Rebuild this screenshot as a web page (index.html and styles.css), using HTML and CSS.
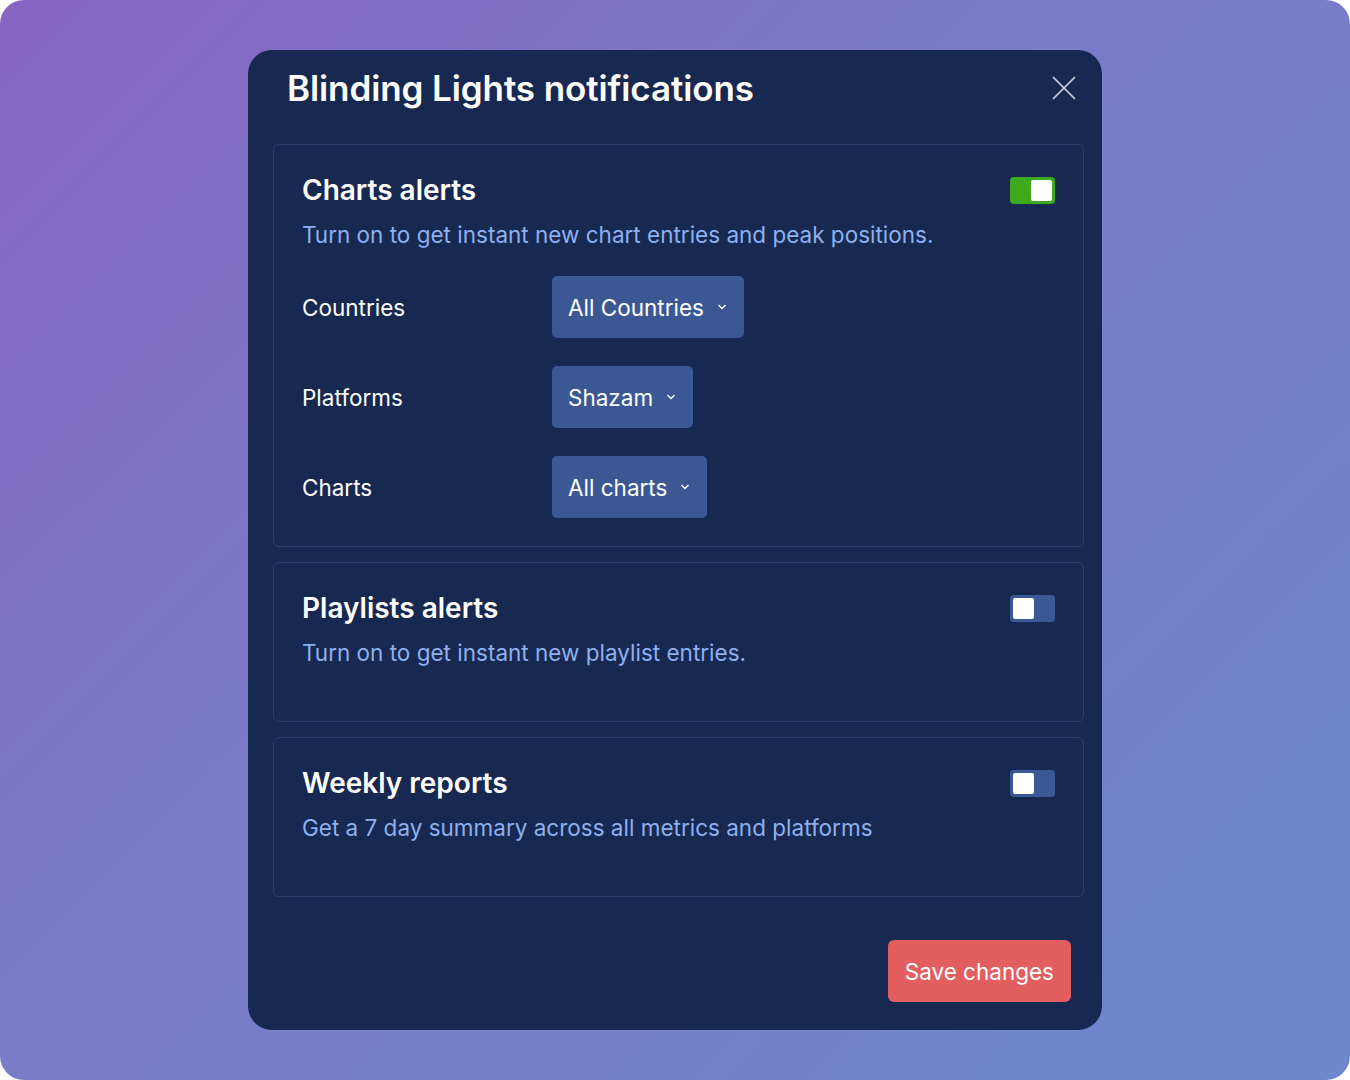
FILE: index.html
```html
<!DOCTYPE html>
<html lang="en">
<head>
  <meta charset="UTF-8">
  <meta name="viewport" content="width=device-width, initial-scale=1.0">
  <title>Blinding Lights notifications</title>
  <link rel="stylesheet" href="styles.css">
</head>
<body>
  <div class="backdrop">
    <div class="modal">
      <!-- Cabecera -->
      <div class="modal-header">
        <h1>Blinding Lights notifications</h1>
        <button class="close" aria-label="Close">
          <svg width="24" height="24" viewBox="0 0 24 24"><path d="M1 1L23 23M23 1L1 23" stroke="#d5d9e6" stroke-width="1.6" fill="none"/></svg>
        </button>
      </div>

      <div class="sections">
        <!-- Alertas de charts -->
        <section class="card">
          <div class="card-head">
            <h2>Charts alerts</h2>
            <span class="toggle on"><span class="knob"></span></span>
          </div>
          <p class="desc">Turn on to get instant new chart entries and peak positions.</p>
          <div class="rows">
            <div class="row">
              <span class="label">Countries</span>
              <button class="select">All Countries <svg width="10" height="6" viewBox="0 0 10 6"><path d="M1.5 1L5 4.5L8.5 1" stroke="#fff" stroke-width="1.4" fill="none"/></svg></button>
            </div>
            <div class="row">
              <span class="label">Platforms</span>
              <button class="select">Shazam <svg width="10" height="6" viewBox="0 0 10 6"><path d="M1.5 1L5 4.5L8.5 1" stroke="#fff" stroke-width="1.4" fill="none"/></svg></button>
            </div>
            <div class="row">
              <span class="label">Charts</span>
              <button class="select">All charts <svg width="10" height="6" viewBox="0 0 10 6"><path d="M1.5 1L5 4.5L8.5 1" stroke="#fff" stroke-width="1.4" fill="none"/></svg></button>
            </div>
          </div>
        </section>

        <!-- Alertas de playlists -->
        <section class="card short">
          <div class="card-head">
            <h2>Playlists alerts</h2>
            <span class="toggle"><span class="knob"></span></span>
          </div>
          <p class="desc">Turn on to get instant new playlist entries.</p>
        </section>

        <!-- Reportes semanales -->
        <section class="card short">
          <div class="card-head">
            <h2>Weekly reports</h2>
            <span class="toggle"><span class="knob"></span></span>
          </div>
          <p class="desc">Get a 7 day summary across all metrics and platforms</p>
        </section>
      </div>

      <div class="modal-footer">
        <button class="save">Save changes</button>
      </div>
    </div>
  </div>
</body>
</html>
```

FILE: styles.css
```css
html, body {
  margin: 0;
  padding: 0;
  background: #ffffff;
}
body {
  font-family: Inter, "Noto Sans", sans-serif;
}
.backdrop {
  width: 1350px;
  height: 1080px;
  border-radius: 24px;
  background: linear-gradient(135deg, #8465c4 0%, #7a7cc8 45%, #6d88cc 100%);
  display: flex;
  align-items: center;
  justify-content: center;
}
.modal {
  width: 854px;
  height: 980px;
  box-sizing: border-box;
  background: #182951;
  border-radius: 24px;
  padding: 0 18px 28px 25px;
  display: flex;
  flex-direction: column;
}
.modal-header {
  display: flex;
  align-items: center;
  justify-content: space-between;
  height: 40px;
  padding: 18px 8px 36px 14px;
}
.modal-header h1 {
  margin: 0;
  color: #ffffff;
  font-size: 35px;
  line-height: 40px;
  font-weight: 600;
  letter-spacing: -0.1px;
}
.close {
  background: none;
  border: 0;
  padding: 0;
  width: 24px;
  height: 24px;
  cursor: pointer;
}
.sections {
  display: flex;
  flex-direction: column;
  gap: 15px;
}
.card {
  border: 1px solid #2a3d6c;
  border-radius: 6px;
  padding: 27px 28px 28px 28px;
}
.card.short {
  height: 160px;
  box-sizing: border-box;
}
.card-head {
  display: flex;
  align-items: center;
  justify-content: space-between;
  height: 36px;
}
.card-head h2 {
  margin: 0;
  color: #ffffff;
  font-size: 28px;
  font-weight: 600;
}
.toggle {
  width: 45px;
  height: 27px;
  border-radius: 4px;
  background: #3b5896;
  box-sizing: border-box;
  padding: 3px;
  display: flex;
  justify-content: flex-start;
}
.toggle.on {
  background: #3ea91a;
  justify-content: flex-end;
}
.knob {
  width: 21px;
  height: 21px;
  background: #ffffff;
  border-radius: 2px;
}
.desc {
  margin: 12px 0 0;
  color: #8db0ef;
  font-size: 22.5px;
  line-height: 30px;
}
.rows {
  margin-top: 26px;
  display: flex;
  flex-direction: column;
  gap: 28px;
}
.row {
  display: flex;
  align-items: center;
}
.label {
  width: 250px;
  color: #ffffff;
  font-size: 22.5px;
}
.select {
  height: 62px;
  display: flex;
  align-items: center;
  gap: 13px;
  padding: 0 17px 0 16px;
  border: 0;
  border-radius: 5px;
  background: #3b5895;
  color: #ffffff;
  font-family: inherit;
  font-size: 22.5px;
  cursor: pointer;
}
.modal-footer {
  margin-top: auto;
  display: flex;
  justify-content: flex-end;
  padding-right: 13px;
}
.save {
  height: 62px;
  padding: 0 17px;
  border: 0;
  border-radius: 6px;
  background: #e35e5f;
  color: #ffffff;
  font-family: inherit;
  font-size: 22.5px;
  cursor: pointer;
}
```
